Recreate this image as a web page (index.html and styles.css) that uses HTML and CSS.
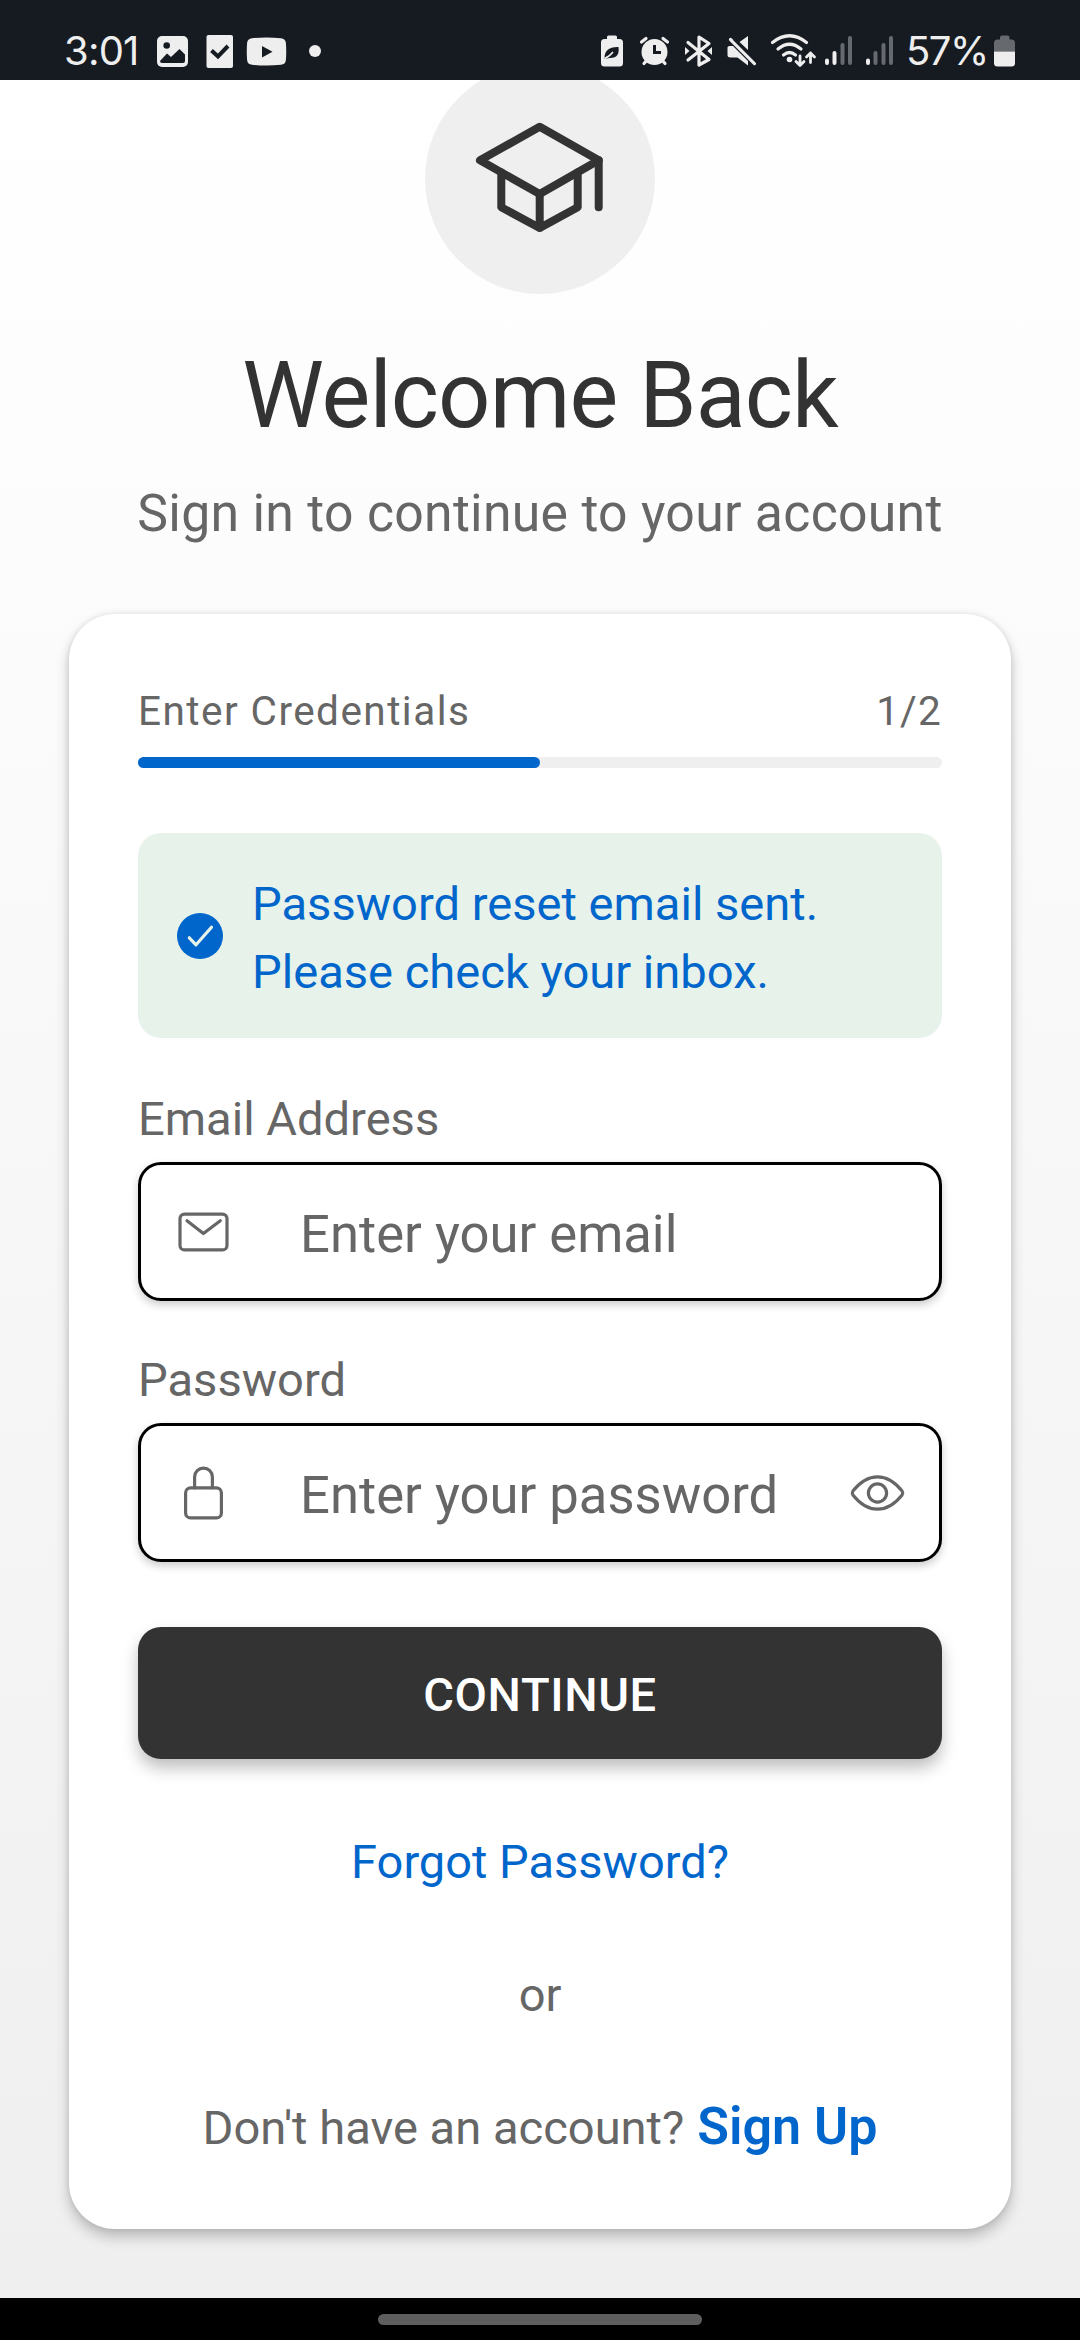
FILE: index.html
```html
<!DOCTYPE html>
<html lang="en">
<head>
<meta charset="utf-8">
<title>Welcome Back</title>
<link rel="stylesheet" href="styles.css">
</head>
<body>
<div class="screen">
  <header class="status">
    <div class="status-left">
      <span class="clock">3:01</span>
      <svg class="status-icons" width="184" height="80" viewBox="0 0 184 80">
        <g fill="#eee">
          <rect x="7" y="36" width="31" height="31" rx="5"/>
          <rect x="56.500" y="35" width="26.500" height="33" rx="2"/>
          <path d="M102 38.200Q116.500 36.600 131 38.200Q135.500 38.600 135.900 43Q136.600 51.500 135.900 60Q135.500 64.400 131 64.800Q116.500 66.200 102 64.800Q97.500 64.400 97.100 60Q96.400 51.500 97.100 43Q97.500 38.600 102 38.200z"/>
          <circle cx="165" cy="51" r="6"/>
        </g>
        <g fill="#161b22">
          <circle cx="16.700" cy="45.500" r="3.300"/>
          <path d="M10 61L17 53.500L21 57L29.500 49L35 54.500V61Q35 63 33 63H12Q10 63 10 61z"/>
          <path d="M112 46V57.500L122.500 51.700z"/>
        </g>
        <path d="M61.500 50.500L68 56.500L78 46" fill="none" stroke="#161b22" stroke-width="4"/>
      </svg>
    </div>
    <div class="status-right">
      <svg class="status-icons" width="300" height="80" viewBox="595 0 300 80">
        <g fill="#eee">
          <path d="M606 39V37Q606 35.500 607.500 35.500H614.500Q616 35.500 616 37V39H618.500Q622 39 622 42.500V63Q622 66.500 618.500 66.500H603.500Q600 66.500 600 63V42.500Q600 39 603.500 39z"/>
          <circle cx="653.500" cy="52" r="13"/>
          <path d="M726.500 47.500Q726.500 46 728.500 46H732L747 61V65.500L736.500 57.500H729.500Q726.500 57.500 726.500 55z"/>
          <path d="M747 36V50L738.500 42z"/>
          <circle cx="788.500" cy="59.500" r="2.800"/>
          <path d="M684 47V55L688.500 51zM711 47V55L706.500 51z"/>
        </g>
        <path d="M603.500 59Q603 46.500 617.500 47Q619 58.500 608.500 58z" fill="#161b22"/>
        <path d="M603.500 58.500Q608 57 612 52" fill="none" stroke="#eee" stroke-width="1.500"/>
        <path d="M653.500 45V52.500H660" fill="none" stroke="#161b22" stroke-width="3"/>
        <g fill="none" stroke="#eee" stroke-width="3.200" stroke-linecap="round" stroke-linejoin="round">
          <path d="M640.500 42L645 38.500M666.500 42L662 38.500M643 63.500L646 60M664 63.500L661 60"/>
          <path d="M687 42.500L708 59.500L698 65V37L708 43.500L687 60"/>
          <path d="M729.500 39.500L753.500 63.500"/>
          <path d="M771.500 42.500Q788.500 29 805.500 42.500M777 49Q788.500 39.500 800 49M782.500 55Q788.500 50 794.500 55"/>
          <path d="M799 56V65M795 61.500L799 65.500L803 61.500M809.500 62.500V53M805.500 57L809.500 53L813.500 57" stroke-width="2.800"/>
        </g>
        <path d="M733 39.500L757 63.500" stroke="#161b22" stroke-width="2"/>
        <g fill="none" stroke-width="4" stroke-linecap="round">
          <path d="M826 60.500V63M833.500 53V63M867 60.500V63" stroke="#eee"/>
          <path d="M841.500 45V63M849 38V63M874.500 53V63M882.500 45V63M890 38V63" stroke="#66696e"/>
        </g>
      </svg>
      <span class="percent">57%</span>
      <svg class="status-icons" width="22" height="80" viewBox="994 0 22 80">
        <path d="M1000 39.500V37.500Q1000 35.500 1002 35.500H1007.500Q1009.500 35.500 1009.500 37.500V39.500H1011.500Q1015 39.500 1015 43V51.500H994V43Q994 39.500 997.500 39.500z" fill="#66696e"/>
        <path d="M994 51.500H1015V63Q1015 66.500 1011.500 66.500H997.500Q994 66.500 994 63z" fill="#eee"/>
      </svg>
    </div>
  </header>

  <main class="page">
    <div class="brand">
      <svg width="230" height="230" viewBox="0 0 230 230" fill="none" stroke="#333" stroke-width="8" stroke-linecap="round" stroke-linejoin="round">
        <path d="M114.700 62.700L173.700 96.300L114.700 130L55 96.300z"/>
        <path d="M76.300 108.500V143.300L114.700 164L152.700 143.300V108.500M114.700 130V164M173.700 96.300V143.300"/>
      </svg>
    </div>
    <h1 class="title">Welcome Back</h1>
    <p class="subtitle">Sign in to continue to your account</p>

    <section class="card">
      <div class="step"><span class="step-name">Enter Credentials</span><span class="step-count">1/2</span></div>
      <div class="progress"><div class="progress-fill" style="width: 50%"></div></div>

      <div class="notice">
        <svg width="46" height="46" viewBox="0 0 46 46">
          <circle cx="23" cy="23" r="23" fill="#0066cc"/>
          <path d="M12.300 24.800L19 31.800L34.500 14.200" fill="none" stroke="#e7f2ea" stroke-width="3.200" stroke-linecap="round" stroke-linejoin="round"/>
        </svg>
        <p class="notice-text">Password reset email sent.<br>Please check your inbox.</p>
      </div>

      <div class="label">Email Address</div>
      <div class="field">
        <svg width="58" height="58" viewBox="0 0 58 58" fill="none" stroke="#666" stroke-width="3.200" stroke-linecap="round" stroke-linejoin="round">
          <rect x="6" y="11.100" width="47" height="35.800" rx="4.500"/>
          <path d="M13 17.800L29.400 30.500L46.300 17.800"/>
        </svg>
        <span class="placeholder">Enter your email</span>
      </div>

      <div class="label label-second">Password</div>
      <div class="field">
        <svg width="58" height="58" viewBox="0 0 58 58" fill="none" stroke="#666" stroke-width="3.200" stroke-linecap="round" stroke-linejoin="round">
          <rect x="11.600" y="23.800" width="35.800" height="30.100" rx="5"/>
          <path d="M20.600 23.800V13A8.900 8.900 0 0 1 38.400 13V23.800"/>
        </svg>
        <span class="placeholder">Enter your password</span>
        <svg width="58" height="58" viewBox="0 0 58 58" fill="none" stroke="#666" stroke-width="3.200" stroke-linejoin="round">
          <path d="M29.500 12.800C19 12.800 11 19.300 4.900 27Q3.600 29 4.900 31C11 38.700 19 45.200 29.500 45.200S48 38.700 54.100 31Q55.400 29 54.100 27C48 19.300 40 12.800 29.500 12.800z"/>
          <circle cx="29.500" cy="29" r="9.100"/>
        </svg>
      </div>

      <div class="button">CONTINUE</div>
      <div class="forgot">Forgot Password?</div>
      <div class="or">or</div>
      <div class="signup"><span class="ask">Don't have an account?</span><span class="link">Sign Up</span></div>
    </section>
  </main>

  <footer class="navbar"><div class="handle"></div></footer>
</div>
</body>
</html>
```
FILE: styles.css
```css
* { box-sizing: border-box; }
body { margin: 0; font-family: Roboto, "Liberation Sans", sans-serif; color: #666; }
h1, p { margin: 0; font-weight: 400; }
svg { display: block; flex: none; }

.screen { width: 1080px; height: 2340px; display: flex; flex-direction: column; overflow: hidden; }

.status {
  height: 80px; flex: none; background: #161b22; color: #eee;
  display: flex; justify-content: space-between; padding: 0 64px;
  font-family: Inter, Roboto, sans-serif; font-size: 40px; line-height: 102px;
}
.status-left, .status-right { display: flex; height: 80px; }
.clock { width: 86px; letter-spacing: -0.8px; white-space: nowrap; }
.percent { width: 88px; margin-left: 10px; letter-spacing: -1.5px; white-space: nowrap; }

.page {
  height: 2218px; flex: none; overflow: hidden;
  display: flex; flex-direction: column; align-items: center;
  background: linear-gradient(#fff, #fcfcfc 22%, #efefef);
}
.brand { width: 230px; height: 230px; border-radius: 50%; background: #efefef; margin-top: -16px; flex: none; }
.title { margin-top: 42px; font-size: 92px; line-height: 120px; color: #333; letter-spacing: -0.9px; white-space: nowrap; }
.subtitle { margin-top: 23px; font-size: 51.75px; line-height: 70px; letter-spacing: 0.27px; white-space: nowrap; }

.card {
  width: 942px; height: 1615px; flex: none; margin-top: 65px; padding: 67px 69px 0;
  border-radius: 46px; background: #fff;
  box-shadow: 0 8px 14px rgba(0, 0, 0, 0.22), 0 0 6px rgba(0, 0, 0, 0.1);
  display: flex; flex-direction: column;
}
.step { display: flex; justify-content: space-between; height: 60px; font-size: 40.5px; line-height: 60px; letter-spacing: 1.45px; white-space: nowrap; }
.step-count { letter-spacing: 1.2px; }
.progress { height: 11px; margin-top: 16px; border-radius: 6px; background: #efefef; }
.progress-fill { height: 100%; border-radius: 6px; background: #0066cc; }

.notice {
  height: 205px; margin-top: 65px; padding-left: 39px; border-radius: 23px; background: #e7f2ea;
  display: flex; align-items: center; gap: 29px;
}
.notice-text { padding-top: 4px; font-size: 47.1px; line-height: 68px; color: #0066cc; white-space: nowrap; }

.label { height: 60px; margin-top: 51px; font-size: 47.1px; line-height: 60px; white-space: nowrap; }
.label-second { margin-top: 49px; }
.field {
  height: 139px; margin-top: 13px; padding: 0 33px; border: 3px solid #000; border-radius: 23px;
  background: #fff; box-shadow: 0 4px 8px rgba(0, 0, 0, 0.2);
  display: flex; align-items: center;
}
.placeholder { flex: 1; margin-left: 68px; font-size: 52.6px; line-height: 70px; padding-top: 4px; white-space: nowrap; }

.button {
  height: 132px; margin-top: 65px; border-radius: 23px; background: #333; color: #fff; text-align: center;
  font-size: 47.1px; font-weight: 500; line-height: 135px; letter-spacing: 0.6px;
  box-shadow: 0 9px 16px rgba(0, 0, 0, 0.25);
}
.forgot { margin-top: 73px; height: 60px; font-size: 47px; line-height: 60px; color: #0066cc; text-align: center; }
.or { margin-top: 73px; height: 60px; font-size: 47px; line-height: 60px; text-align: center; }
.signup { margin-top: 70px; height: 64px; font-size: 47.1px; display: flex; justify-content: center; align-items: baseline; gap: 13px; white-space: nowrap; line-height: 64px; }
.link { font-size: 52px; font-weight: 600; color: #0066cc; }

.navbar { height: 42px; flex: none; background: #000; display: flex; justify-content: center; padding-top: 16px; }
.handle { width: 324px; height: 11px; border-radius: 6px; background: #5e5e5e; }
```
